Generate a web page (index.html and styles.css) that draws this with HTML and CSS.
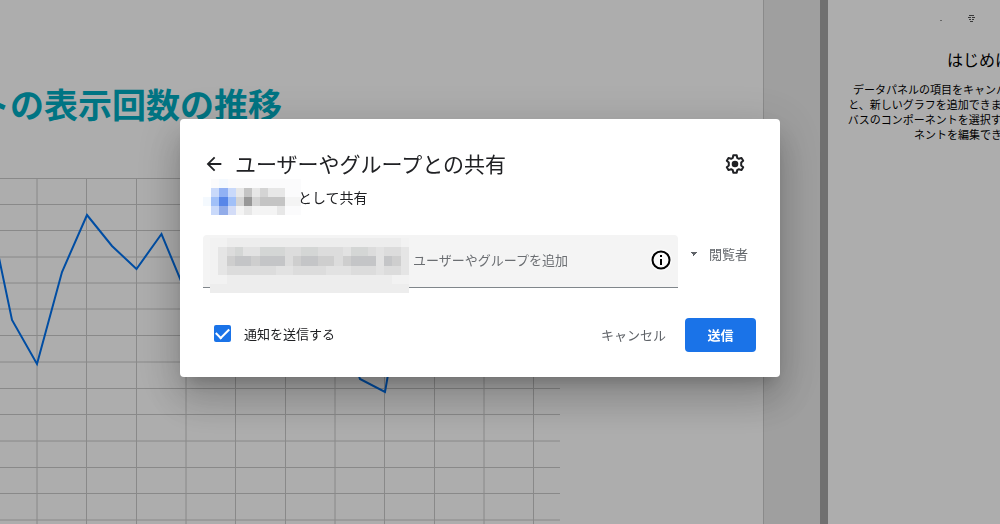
FILE: index.html
```html
<!DOCTYPE html>
<html lang="ja">
<head>
<meta charset="utf-8">
<title>ユーザーやグループとの共有</title>
<link rel="stylesheet" href="styles.css">
</head>
<body>
<div class="workspace">
  <main class="canvas">
    <div class="report">
      <h1 class="report-title">トの表示回数の推移</h1>
      <svg class="chart" viewBox="0 0 560 346" aria-hidden="true">
        <path class="grid" d="M0 .5H560M0 26.5H560M0 52.5H560M0 79H560M0 105H560M0 131H560M0 157.500H560M0 184H560M0 210.500H560M0 236.500H560M0 263H560M0 289.500H560M0 315.500H560M0 342H560M37 0V346M86.500 0V346M136.500 0V346M186 0V346M235.500 0V346M285.500 0V346M335 0V346M384.500 0V346M434.500 0V346M484 0V346M533.500 0V346"/>
        <path class="series" d="M-2 75L12 142L37 186L62 94L87 37L112 68L136.500 91L161.500 56L186 115L211 160L236 120L261 170L286 110L311 180L336 130L360 201L385 214L410 70"/>
      </svg>
    </div>
  </main>
  <div class="divider"></div>
  <aside class="panel">
    <div class="panel-body">
      <svg class="panel-art" viewBox="0 0 60 12" aria-hidden="true"><path d="M0 8h2v1h-2z" fill="#999"/><path d="M29 3.500h5M28 5.500h3m1 0h3M29 7.500h2m1 0h2M30 9.500h3" stroke="#555" fill="none"/></svg>
      <h2 class="panel-title">はじめに</h2>
      <p class="panel-text">データパネルの項目をキャンバスにドラッグする<br>と、新しいグラフを追加できます。または、キャン<br>バスのコンポーネントを選択すると、そのコンポー<br>ネントを編集できます。</p>
    </div>
  </aside>
</div>

<div class="scrim">
  <form class="dialog" role="dialog" aria-labelledby="dialog-title">
    <header class="dialog-head">
      <button class="icon-button" type="button" aria-label="戻る">
        <svg width="22" height="22" viewBox="0 0 24 24"><path fill="#202124" d="M20 11H7.830l5.590-5.590L12 4l-8 8 8 8 1.410-1.410L7.830 13H20z"/></svg>
      </button>
      <h2 class="dialog-title" id="dialog-title">ユーザーやグループとの共有</h2>
      <button class="icon-button" type="button" aria-label="設定">
        <svg width="24" height="24" viewBox="0 0 24 24"><path fill="none" stroke="#202124" stroke-width="2" stroke-linejoin="round" d="M10.300 3.200h3.400l.5 2.600 1.700 1 2.600-.9 1.700 2.900-2 1.700v3l2 1.700-1.700 2.900-2.600-.9-1.700 1-.5 2.600h-3.400l-.5-2.600-1.700-1-2.600.9-1.700-2.900 2-1.700v-3l-2-1.700 1.700-2.900 2.600.9 1.700-1z"/><circle cx="12" cy="12" r="3.300" fill="#202124"/></svg>
      </button>
    </header>
    <div class="account">
      <svg class="account-mask" viewBox="0 0 12 4" preserveAspectRatio="none" shape-rendering="crispEdges" aria-hidden="true">
        <path fill="#fbfbfc" d="M1 0h11v4H1z"/><path fill="#f4f9fe" d="M2 0h1v1H2zM0 2h1v1H0z"/>
        <path fill="#c9d9fa" d="M1 1h1v1H1zM3 1h1v1H3zM1 3h1v1H1z"/><path fill="#91b1f4" d="M2 1h1v1H2z"/>
        <path fill="#a1c0f8" d="M1 2h1v1H1zM3 2h1v1H3z"/><path fill="#5886e8" d="M2 2h1v1H2z"/><path fill="#92ace9" d="M2 3h1v1H2z"/><path fill="#d3dcf7" d="M3 3h1v1H3z"/>
        <path fill="#e7e7e7" d="M4 1h1v1H4zM6 1h1v1H6zM8 1h2v1H8zM5 3h1v1H5zM9 3h1v1H9z"/><path fill="#c4c4c4" d="M5 1h1v1H5zM7 2h3v1H7z"/><path fill="#d4d4d4" d="M7 1h1v1H7zM4 2h1v1H4zM6 2h1v1H6z"/><path fill="#989898" d="M5 2h1v1H5z"/><path fill="#f4f4f4" d="M4 3h1v1H4zM6 3h3v1H6zM10 2h2v1H10z"/>
      </svg>
      <span>として共有</span>
    </div>
    <div class="invite">
      <div class="field">
        <svg class="chip-mask" viewBox="0 0 24 6" preserveAspectRatio="none" shape-rendering="crispEdges" aria-hidden="true">
          <path fill="#ededed" d="M0 0h24v6H0z"/><path fill="#f2f2f2" d="M0 0h2v5H0zM23 0h1v5H23zM22 4h1v1H22z"/>
          <path fill="#e5e5e5" d="M1 1h1v3H1zM23 1h1v3H23z"/>
          <path fill="#dcdcdc" d="M2 1h21v3H2z"/><path fill="#d4d6d5" d="M3 1h1v1H3zM6 1h3v1H6zM11 1h2v1H11zM17 1h2v1H17z"/>
          <path fill="#e2e2e2" d="M4 1h2v1H4zM16 1h1v1H16zM20 1h1v3H20zM8 3h2v1H8zM14 3h3v1H14z"/>
          <path fill="#cecece" d="M2 2h1v1H2zM5 2h1v1H5zM10 2h1v1H10zM13 2h2v1H13zM16 2h1v1H16zM22 2h1v1H22z"/>
          <path fill="#c4c5c7" d="M3 2h2v1H3zM6 2h3v1H6zM11 2h2v1H11zM17 2h3v1H17zM21 2h1v1H21z"/>
        </svg>
        <input class="field-input" type="text" placeholder="ユーザーやグループを追加" aria-label="ユーザーやグループを追加">
        <button class="icon-button info" type="button" aria-label="詳細">
          <svg width="24" height="24" viewBox="0 0 24 24"><circle cx="12" cy="12" r="11" fill="#fafafa"/><circle cx="12" cy="12" r="8.500" fill="none" stroke="#000" stroke-width="2"/><path fill="#000" d="M11 7h2v2h-2zM11 11h2v6h-2z"/></svg>
        </button>
      </div>
      <select class="role" aria-label="権限"><option>閲覧者</option></select>
    </div>
    <footer class="actions">
      <label class="notify"><input class="checkbox" type="checkbox" checked>通知を送信する</label>
      <button class="cancel" type="button">キャンセル</button>
      <button class="send" type="submit">送信</button>
    </footer>
  </form>
</div>
</body>
</html>
```
FILE: styles.css
```css
* { box-sizing: border-box; }

body {
  margin: 0;
  font-family: "Noto Sans CJK JP", "Noto Sans", sans-serif;
  font-size: 13px;
  color: #202124;
  background: #fff;
}

h1, h2, p { margin: 0; }

button, input, select {
  font: inherit;
  color: inherit;
  margin: 0;
  padding: 0;
  border: 0;
  background: none;
}

.workspace {
  display: grid;
  grid-template-columns: minmax(0, 1fr) 8px 172px;
  height: 100vh;
  overflow: hidden;
}

.canvas { background: #ebebeb; padding-right: 56px; overflow: hidden; }

.report {
  min-height: 100%;
  padding-top: 80px;
  background: #fff;
  border-right: 1px solid #ccc;
  overflow: hidden;
}

.report-title {
  margin-left: -24px;
  font-size: 34px;
  line-height: 48px;
  color: #00acc1;
  white-space: nowrap;
}

.chart { display: block; width: 560px; margin-top: 50px; }
.grid { fill: none; stroke: #cacaca; stroke-width: 1; }
.series { fill: none; stroke: #0072f0; stroke-width: 2; }

.divider { background: #a5a5a5; }

.panel { overflow: hidden; padding: 12px 0 0 15px; }

.panel-body {
  display: flex;
  flex-direction: column;
  align-items: center;
  width: 262px;
}

.panel-art { width: 60px; height: 12px; margin-right: 8px; }
.panel-title { margin-top: 24px; padding-left: 10px; font-size: 16px; font-weight: 400; line-height: 22px; color: #000; }
.panel-text { margin-top: 12px; font-size: 11px; line-height: 15px; text-align: center; white-space: nowrap; color: #000; }

.scrim {
  position: fixed;
  inset: 0;
  display: flex;
  align-items: center;
  justify-content: center;
  padding: 0 40px 28px 0;
  background: rgba(0, 0, 0, .32);
}

.dialog {
  width: 600px;
  max-width: 100%;
  padding: 30px 24px 25px 23px;
  background: #fff;
  border-radius: 4px;
  box-shadow: 0 11px 15px -7px rgba(0, 0, 0, .2), 0 24px 38px 3px rgba(0, 0, 0, .14), 0 9px 46px 8px rgba(0, 0, 0, .12);
}

.dialog-head { display: flex; align-items: center; padding-right: 9px; }
.dialog-title { flex: 1; margin-left: 10px; padding-bottom: 2px; font-size: 21px; font-weight: 400; line-height: 28px; white-space: nowrap; }
.icon-button { display: flex; flex: none; }

.account { display: flex; align-items: center; height: 36px; font-size: 14px; }
.account-mask { width: 98px; height: 36px; margin-right: -3px; }

.invite { display: flex; align-items: flex-start; gap: 12px; margin-top: 20px; }

.field {
  display: flex;
  flex: 1;
  align-items: center;
  height: 53px;
  padding: 0 5px 3px 7px;
  background: #f4f4f4;
  border-bottom: 1px solid #80868b;
  border-radius: 4px 4px 0 0;
}

.chip-mask { flex: none; width: 199px; height: 55px; margin: 6px 4px -6px 0; }
.field-input { flex: 1; min-width: 0; height: 32px; outline: 0; }
.field-input::placeholder { color: #6b6e72; opacity: 1; }

.role {
  appearance: none;
  width: 66px;
  height: 36px;
  padding-left: 19px;
  color: #5f6368;
  background: linear-gradient(to bottom left, #5f6368 50%, transparent 50%) 0 17px / 4px 4px no-repeat,
    linear-gradient(to bottom right, #5f6368 50%, transparent 50%) 4px 17px / 4px 4px no-repeat;
}

.actions { display: flex; align-items: center; margin-top: 30px; }
.notify { display: flex; flex: 1; align-items: center; gap: 13px; padding: 0 0 3px 11px; }

.checkbox {
  appearance: none;
  width: 17px;
  height: 17px;
  display: grid;
  place-items: center;
  background: #1a73e8;
  border-radius: 2px;
}

.checkbox:checked::before {
  content: "";
  width: 11px;
  height: 6px;
  margin-bottom: 3px;
  border: solid #fff;
  border-width: 0 0 2px 2px;
  transform: rotate(-45deg);
}

.cancel { color: #5f6368; margin-right: 19px; padding-bottom: 2px; }
.send { width: 71px; height: 34px; padding-bottom: 2px; color: #fff; font-weight: 700; background: #1a73e8; border-radius: 4px; }
```
